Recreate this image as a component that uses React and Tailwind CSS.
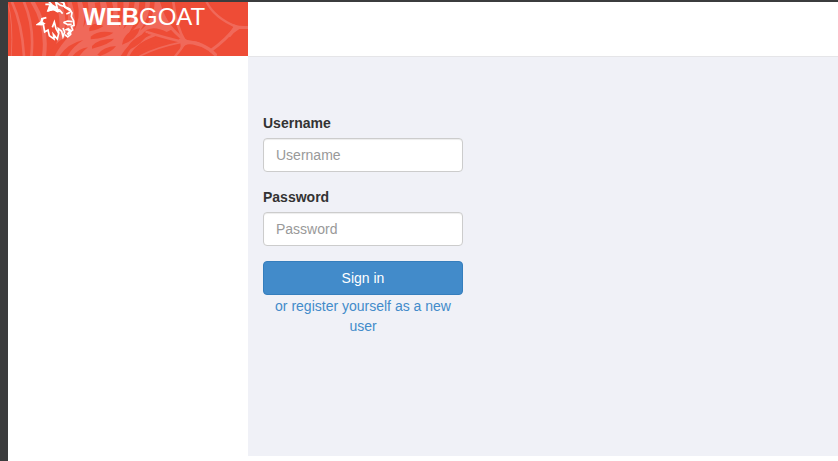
function Web() {
  return (
    <svg
      className="absolute inset-0 h-full w-full"
      viewBox="24 6 720 162"
      preserveAspectRatio="none"
      aria-hidden="true"
    >
      <rect x="24" y="6" width="720" height="162" fill="#ee4c36" />
      <path
        d="M168 6 L480 6 Q492 50 520 86 L500 96 Q450 70 425 104 Q385 130 362 168 L150 168 Q196 100 168 6 Z"
        fill="#f0695a"
      />
      <g fill="none" stroke="#f0695a" strokeLinecap="round">
        <path d="M36 6 Q66 70 72 168" strokeWidth="8" />
        <path d="M72 6 Q104 80 94 168" strokeWidth="8" />
        <path d="M98 6 Q144 80 132 168" strokeWidth="12" />
        <path d="M24 12 Q40 60 34 168" strokeWidth="3" />
        <path d="M470 6 Q496 80 558 124" strokeWidth="9" />
        <path d="M520 6 Q528 80 556 126" strokeWidth="8" />
        <path d="M440 96 Q490 112 558 128" strokeWidth="8" />
        <path d="M384 168 Q400 130 462 106" strokeWidth="8" />
        <path d="M420 168 Q470 142 540 128" strokeWidth="5" />
        <path d="M556 128 Q542 150 526 168" strokeWidth="7" />
        <path d="M552 126 Q610 126 646 164" strokeWidth="10" />
        <path d="M632 152 Q680 118 706 82" strokeWidth="9" />
        <path d="M620 6 Q642 52 708 80 L744 82" strokeWidth="7" />
      </g>
      <path d="M688 70 Q700 72 718 78 L744 79 L744 87 L718 87 Q702 96 690 112 L682 108 Q696 88 700 81 Z" fill="#f0695a" />
      <path d="M536 116 Q552 116 572 122 Q590 122 604 130 L570 132 Q552 134 540 150 Q545 134 536 116 Z" fill="#f0695a" />
      <g fill="#ee4c36">
        <path d="M184 6 Q204 60 192 102 Q210 64 202 6 Z" />
        <path d="M215 6 Q230 54 222 94 Q244 54 232 6 Z" />
        <path d="M246 6 Q258 40 250 82 Q272 42 263 6 Z" />
        <path d="M284 8 Q288 40 298 58 Q306 36 300 6 Z" />
        <path d="M318 6 Q326 44 336 60 Q344 34 336 6 Z" />
        <path d="M352 6 Q352 50 358 82 Q374 42 370 6 Z" />
        <path d="M388 6 Q382 52 370 88 Q400 58 404 6 Z" />
        <path d="M418 6 Q418 50 384 104 Q436 62 436 6 Z" />
        <path d="M450 6 Q450 50 420 92 Q462 62 464 6 Z" />
        <path d="M150 152 Q176 118 210 106 Q182 134 164 168 L144 168 Z" />
        <path d="M178 168 Q204 130 250 120 Q220 138 202 168 Z" />
        <path d="M218 168 Q236 146 264 142 Q248 154 238 168 Z" />
        <path d="M272 110 Q296 88 340 98 Q320 114 272 118 Z" />
        <path d="M276 138 Q294 116 342 116 Q330 132 276 146 Z" />
        <path d="M292 164 Q310 140 348 138 Q338 154 300 168 Z" />
        <path d="M268 84 Q282 62 310 78 Q300 88 268 94 Z" />
        <path d="M366 134 Q372 94 420 84 Q412 118 366 134 Z" />
        <path d="M378 154 Q390 114 444 98 Q432 130 378 154 Z" />
        <path d="M400 160 Q412 126 464 112 L504 122 Q454 130 400 160 Z" />
      </g>
    </svg>
  );
}

function Goat() {
  return (
    <svg
      className="block h-[40px] w-[40px] shrink-0"
      viewBox="0 0 120 120"
      aria-hidden="true"
    >
      <g fill="none" stroke="#fff" strokeWidth="5" strokeLinejoin="miter">
        <path d="M28 7 L43 7 L36 26 L54 22 L64 29 L73 27 L80 35" />
        <path d="M38 -2 L49 10 L64 19 L59 0 L73 10 L85 13" />
        <path d="M72 -2 L84 3 L87 14 L101 21 L108 33 L106 43 L113 57 L114 70 L106 73 L110 84 L103 89 L104 97 L95 105 L87 98" />
        <path d="M91 36 L103 31" />
        <path d="M84 61 L95 57 L110 59" />
        <path d="M82 61 L95 68 L107 67 M88 84 L97 80 L103 86" />
        <path d="M31 47 L18 50 L16 59 L5 67 L22 67 L26 90 L36 84 L40 101 L54 111 L52 97 L64 111 L68 94 L60 80 L55 60 L49 76" />
        <path d="M68 94 L67 80 L77 88 L81 104 L86 90 L81 78" />
      </g>
      <path
        d="M36 5 L49 9 L64 21 L74 22 L65 31 L51 24 L34 30 L39 12 Z M79 0 L85 3 L88 15 L101 19 L110 34 L96 25 L84 17 Z M88 82 L102 81 L108 88 L97 101 L92 95 L98 88 Z M15 49 L24 47 L20 59 L29 65 L18 70 L3 69 L14 60 Z"
        fill="#fff"
      />
    </svg>
  );
}

const inputClass =
  "block h-[34px] w-full rounded border border-[#ccc] bg-white px-3 text-sm text-[#555] shadow-[inset_0_1px_1px_rgba(0,0,0,0.075)] outline-none placeholder:text-[#999] placeholder:opacity-100";

export default function App() {
  return (
    <div className="flex min-h-screen flex-col border-l-8 border-t-2 border-[#3b3c3d] bg-white font-['Liberation_Sans',Arial,sans-serif] text-sm leading-5 text-[#333]">
      <header className="flex">
        <div className="relative h-[54px] w-60 shrink-0 overflow-hidden">
          <Web />
          <a href="#home" className="relative flex pl-7 text-2xl leading-[30px] text-white">
            <Goat />
            <span className="pl-[7px]">
              <b>WEB</b>GOAT
            </span>
          </a>
        </div>
        <div className="h-[55px] grow border-b border-[#e5e5e8]" />
      </header>
      <div className="-mt-px flex grow pb-[5px]">
        <aside className="w-60 shrink-0" />
        <main className="mt-px grow bg-[#f0f1f7] px-[15px] pt-14">
          <form className="w-[200px]" onSubmit={(e) => e.preventDefault()}>
            <div className="mb-[15px]">
              <label htmlFor="username" className="mb-[5px] block font-bold">
                Username
              </label>
              <input id="username" type="text" placeholder="Username" className={inputClass} />
            </div>
            <div className="mb-[15px]">
              <label htmlFor="password" className="mb-[5px] block font-bold">
                Password
              </label>
              <input id="password" type="password" placeholder="Password" className={inputClass} />
            </div>
            <button
              type="submit"
              className="block h-[34px] w-full rounded border border-[#357ebd] bg-[#428bca] text-sm text-white"
            >
              Sign in
            </button>
            <div className="px-2 pt-px text-center">
              <a href="#register" className="text-[#428bca]">
                or register yourself as a new user
              </a>
            </div>
          </form>
        </main>
      </div>
    </div>
  );
}
